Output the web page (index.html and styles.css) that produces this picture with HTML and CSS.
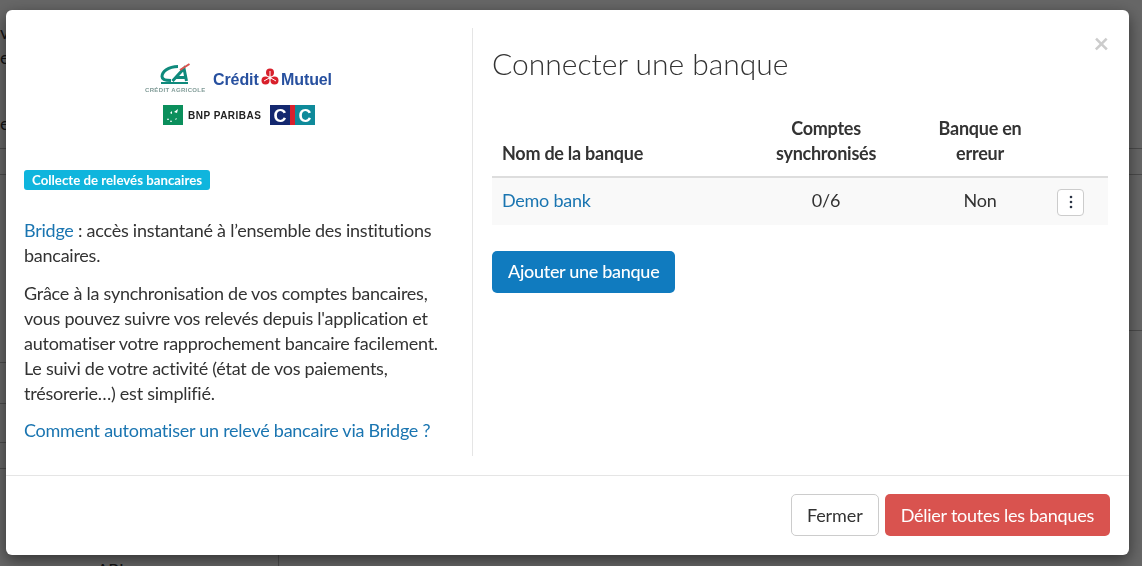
FILE: index.html
```html
<!DOCTYPE html>
<html lang="fr">
<head>
    <meta charset="UTF-8">
    <meta name="viewport" content="width=device-width, initial-scale=1.0">
    <title>Connecter une banque</title>
    <link rel="stylesheet" href="styles.css">
</head>
<body>
    <!-- page behind the modal -->
    <div class="page">
        <div class="page-side">
            <div class="page-top">
                <div>vo</div>
                <div>e</div>
            </div>
            <div class="page-row page-row-title">e</div>
            <div class="page-row page-row-small"></div>
            <div class="page-row page-row-a"></div>
            <div class="page-row page-row-b"></div>
            <div class="page-row page-row-c"></div>
            <div class="page-row page-row-small"></div>
            <div class="page-bottom"><span class="page-dot"></span>ABI</div>
        </div>
        <div class="page-main">
            <div class="page-top"></div>
            <div class="page-row page-row-title"></div>
            <div class="page-row page-row-small"></div>
            <div class="page-row page-row-tall"></div>
        </div>
    </div>

    <div class="backdrop"></div>

    <div class="modal-wrap">
        <div class="modal">
            <div class="modal-body">
                <div class="col-left">
                    <svg class="logos" width="200" height="70" viewBox="140 60 200 70">
                        <!-- credit agricole -->
                        <path class="ca-stroke" d="M178 66.500 C168 66.500 162 72 162 76.500 C162 79.500 165 80.500 171 80.500"/>
                        <path class="ca-stroke" d="M172.500 81 L184 68.500 L186.500 81"/>
                        <path class="ca-stroke" d="M176 77.500 L185 77.500"/>
                        <path class="ca-red" d="M180 70 L189.500 64"/>
                        <rect x="161" y="82" width="27" height="2" fill="#0f8a7c"/>
                        <text class="logo-ca" x="145" y="92">CRÉDIT AGRICOLE</text>
                        <!-- credit mutuel -->
                        <text class="logo-cm" x="213" y="84.500">Crédit</text>
                        <circle cx="270" cy="72.500" r="4" fill="#d8202c"/>
                        <circle cx="265.500" cy="80.500" r="4" fill="#d8202c"/>
                        <circle cx="274.500" cy="80.500" r="4" fill="#d8202c"/>
                        <path class="cm-cut" d="M270 77.500 L270 71 M270 77.500 L264 81 M270 77.500 L276 81"/>
                        <text class="logo-cm" x="281" y="84.500">Mutuel</text>
                        <!-- bnp -->
                        <rect x="163" y="105" width="20" height="20" fill="#0b8f5c"/>
                        <path d="M167 120 L168 118 L169 120 Z M170 122 L171 120 L172 122 Z M174 112 L178 109 L177 113 Z M170 113 L172 111 L172 114 Z M175 119 L177 118 L176 120 Z" fill="#fff"/>
                        <text class="logo-bnp" x="188" y="118.500">BNP PARIBAS</text>
                        <!-- cic -->
                        <rect x="270" y="105" width="20" height="20" fill="#14286f"/>
                        <rect x="290" y="105" width="5" height="20" fill="#d8202c"/>
                        <rect x="295" y="105" width="20" height="20" fill="#0f8a9a"/>
                        <text class="logo-cic" x="280" y="121.500">C</text>
                        <text class="logo-cic" x="305" y="121.500">C</text>
                    </svg>
                    <div><span class="badge">Collecte de relevés bancaires</span></div>
                    <p class="intro"><a href="#">Bridge</a> : accès instantané à l’ensemble des institutions bancaires.</p>
                    <p>Grâce à la synchronisation de vos comptes bancaires, vous pouvez suivre vos relevés depuis l'application et automatiser votre rapprochement bancaire facilement. Le suivi de votre activité (état de vos paiements, trésorerie…) est simplifié.</p>
                    <p><a href="#">Comment automatiser un relevé bancaire via Bridge ?</a></p>
                </div>
                <div class="col-right">
                    <div class="title-row">
                        <h4>Connecter une banque</h4>
                        <span class="close">×</span>
                    </div>
                    <table class="banks">
                        <thead>
                            <tr>
                                <th class="col-name">Nom de la banque</th>
                                <th class="col-count">Comptes synchronisés</th>
                                <th class="col-error">Banque en erreur</th>
                                <th></th>
                            </tr>
                        </thead>
                        <tbody>
                            <tr>
                                <td><a href="#">Demo bank</a></td>
                                <td class="center">0/6</td>
                                <td class="center">Non</td>
                                <td class="center">
                                    <button class="btn-more">
                                        <svg width="4" height="14" viewBox="0 0 4 14"><circle cx="2" cy="2" r="1.300"/><circle cx="2" cy="7" r="1.300"/><circle cx="2" cy="12" r="1.300"/></svg>
                                    </button>
                                </td>
                            </tr>
                        </tbody>
                    </table>
                    <button class="btn btn-primary">Ajouter une banque</button>
                </div>
            </div>
            <div class="modal-footer">
                <button class="btn btn-default">Fermer</button>
                <button class="btn btn-danger">Délier toutes les banques</button>
            </div>
        </div>
    </div>
</body>
</html>
```

FILE: styles.css
```css
* {
    box-sizing: border-box;
}
html, body {
    height: 100%;
}
body {
    margin: 0;
    overflow: hidden;
    font-family: Lato, "Open Sans", sans-serif;
    font-size: 18px;
    line-height: 25px;
    letter-spacing: -.25px;
    color: #333;
    background: #fff;
}
a {
    color: #1a75b1;
    text-decoration: none;
}

/* page behind */
.page {
    height: 566px;
    display: flex;
    overflow: hidden;
}
.page-side {
    width: 279px;
    flex-shrink: 0;
}
.page-main {
    flex: 1;
}
.page-top {
    height: 111px;
    padding-top: 20px;
}
.page-row {
    border-bottom: 1px solid #bbb;
}
.page-row-title {
    height: 38px;
}
.page-row-small {
    height: 26px;
}
.page-row-a {
    height: 188px;
}
.page-row-b {
    height: 41px;
}
.page-row-c {
    height: 39px;
}
.page-row-tall {
    height: 156px;
}
.page-bottom {
    height: 97px;
    padding: 89px 0 0 82px;
    font-size: 17px;
    border-right: 1px solid #bbb;
}
.page-dot {
    display: inline-block;
    width: 8px;
    height: 8px;
    margin-right: 7px;
    border-radius: 50%;
    background: #e8a33d;
}
.backdrop {
    position: fixed;
    inset: 0;
    background: #000;
    opacity: .6;
}

/* modal */
.modal-wrap {
    position: fixed;
    inset: 0;
    padding: 10px 13px 11px 6px;
}
.modal {
    height: 545px;
    display: flex;
    flex-direction: column;
    background: #fff;
    border-radius: 6px;
    box-shadow: 0 5px 15px rgba(0, 0, 0, .5);
}
.modal-body {
    height: 465px;
    padding: 18px 21px 19px 18px;
    display: flex;
}
.col-left {
    width: 449px;
    padding-top: 32px;
    padding-right: 16px;
    border-right: 1px solid #e5e5e5;
}
.logos {
    display: block;
    margin: 0 auto 40px;
    letter-spacing: 0;
}
.ca-stroke {
    fill: none;
    stroke: #0f8a7c;
    stroke-width: 3;
}
.ca-red {
    fill: none;
    stroke: #d9534f;
    stroke-width: 2;
}
.cm-cut {
    fill: none;
    stroke: #fff;
    stroke-width: 1;
}
.logo-ca {
    font-family: "Liberation Sans", sans-serif;
    font-size: 6px;
    font-weight: bold;
    letter-spacing: .35px;
    fill: #7f9a96;
}
.logo-cm {
    font-family: "Liberation Sans", sans-serif;
    font-size: 16px;
    font-weight: bold;
    letter-spacing: -.1px;
    fill: #27509f;
}
.logo-bnp {
    font-family: "Liberation Sans", sans-serif;
    font-size: 10px;
    font-weight: bold;
    letter-spacing: .5px;
    fill: #222;
}
.logo-cic {
    font-family: "Liberation Sans", sans-serif;
    font-size: 18px;
    font-weight: bold;
    text-anchor: middle;
    fill: #fff;
}
.badge {
    display: inline-block;
    height: 20px;
    padding: 0 8px;
    font-size: 13.250px;
    font-weight: bold;
    line-height: 20px;
    letter-spacing: 0;
    color: #fff;
    background: #0fb5dd;
    border-radius: 3px;
    vertical-align: top;
}
.col-left p {
    margin: 0 0 12px;
}
.col-left .intro {
    margin: 23px 0 13px;
}
.col-right {
    flex: 1;
    padding-left: 19px;
}
.title-row {
    height: 82px;
    padding-top: 17px;
    display: flex;
    justify-content: space-between;
    align-items: flex-start;
}
.title-row h4 {
    margin: 0;
    font-size: 30px;
    font-weight: 300;
    line-height: 36px;
    letter-spacing: 0;
}
.close {
    margin-top: -17px;
    margin-right: -1px;
    font-size: 27px;
    font-weight: bold;
    line-height: 30px;
    color: #ccc;
}

/* table */
.banks {
    width: 616px;
    border-collapse: collapse;
    table-layout: fixed;
}
.banks th {
    padding: 6px 10px 10px;
    font-weight: bold;
    line-height: 25px;
    text-align: center;
    vertical-align: bottom;
    border-bottom: 2px solid #ddd;
}
.banks .col-name {
    width: 231px;
    text-align: left;
}
.banks .col-count {
    width: 206px;
    padding-left: 37px;
    padding-right: 37px;
}
.banks .col-error {
    width: 102px;
    padding-left: 5px;
    padding-right: 5px;
}
.banks td {
    height: 48px;
    padding: 6px 10px 8px;
    background: #f9f9f9;
}
.banks .center {
    text-align: center;
}
.btn-more {
    display: block;
    width: 27px;
    height: 27px;
    margin: 3px auto 0;
    padding: 0;
    position: relative;
    left: 1px;
    background: #fff;
    border: 1px solid #ccc;
    border-radius: 4px;
}
.btn-more svg {
    display: block;
    margin: 0 auto;
    fill: #2b3445;
}
.btn {
    height: 42px;
    padding: 0 15px;
    font-family: inherit;
    font-size: 18px;
    letter-spacing: inherit;
    border: 1px solid transparent;
    border-radius: 5px;
}
.btn-primary {
    margin-top: 26px;
    padding-bottom: 2px;
    color: #fff;
    font-weight: 500;
    letter-spacing: -.3px;
    background: #107bbf;
}
.btn-default {
    color: #333;
    letter-spacing: -.08px;
    background: #fff;
    border-color: #ccc;
}
.btn-danger {
    color: #fff;
    background: #d9534f;
}
.modal-footer {
    flex: 1;
    display: flex;
    justify-content: flex-end;
    gap: 6px;
    padding: 18px 19px 0 0;
    border-top: 1px solid #e5e5e5;
}
```
